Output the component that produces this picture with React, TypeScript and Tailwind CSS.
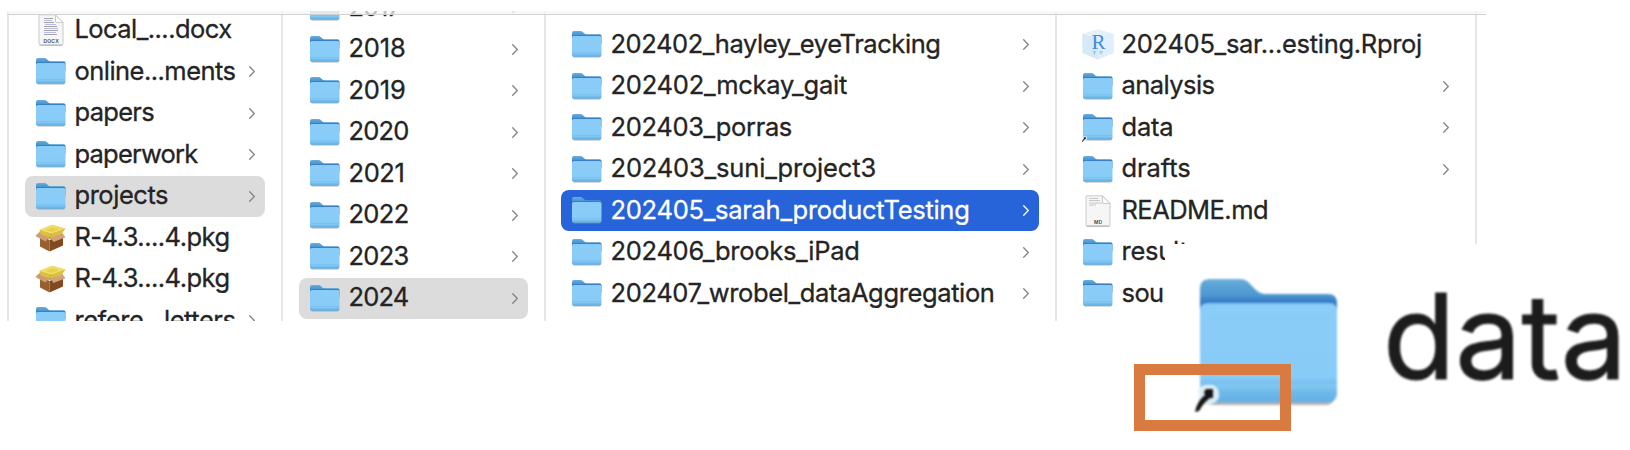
import { useId, useLayoutEffect, useRef, useState } from "react";

type Kind = "folder" | "alias" | "docx" | "md" | "pkg" | "rproj";
type Entry = { name: string; width: number; kind?: Kind; leaf?: boolean; state?: "path" | "active" };

// Label whose tracking is adjusted so that it fills the given width.
function Label({ text, width, className }: { text: string; width: number; className: string }) {
  const ref = useRef<HTMLSpanElement>(null);
  const [spacing, setSpacing] = useState(0);
  useLayoutEffect(() => {
    const el = ref.current;
    if (!el) return;
    el.style.letterSpacing = "0px";
    const natural = el.getBoundingClientRect().width;
    const next = (width - natural) / text.length;
    el.style.letterSpacing = `${next}px`;
    setSpacing(next);
  }, [text, width]);
  return (
    <span ref={ref} className={className} style={{ letterSpacing: `${spacing}px` }}>
      {text}
    </span>
  );
}

function Folder({ className, alias }: { className: string; alias?: boolean }) {
  const id = useId();
  return (
    <svg viewBox="0 0 137 126" className={className} overflow="visible" preserveAspectRatio="none">
      <defs>
        <linearGradient id={`${id}b`} x1="0" y1="0" x2="0" y2="1">
          <stop offset="0" stopColor="#6db3e0" />
          <stop offset="0.08" stopColor="#5ea6d8" />
          <stop offset="0.28" stopColor="#4c97d1" />
          <stop offset="0.36" stopColor="#397ec6" />
          <stop offset="1" stopColor="#397ec6" />
        </linearGradient>
        <linearGradient id={`${id}f`} x1="0" y1="0" x2="0" y2="1">
          <stop offset="0" stopColor="#7fcaf7" />
          <stop offset="0.04" stopColor="#8bcdf8" />
          <stop offset="0.76" stopColor="#87cbf7" />
          <stop offset="0.8" stopColor="#7ac0ee" />
          <stop offset="0.84" stopColor="#82c7f3" />
          <stop offset="0.9" stopColor="#6fb9ea" />
          <stop offset="1" stopColor="#60b0e4" />
        </linearGradient>
      </defs>
      <path d="M3 114 Q3 126 12 126 H126 Q135 126 135 114Z" fill="#8c9299" opacity="0.7" />
      <path
        d="M0 10 Q0 0 9 0 H40 Q46 0 50 5 L56 11 Q60 15 66 15 H128 Q137 15 137 24 V60 H0Z"
        fill={`url(#${id}b)`}
      />
      <path d="M0 32 Q0 24 8 24 H129 Q137 24 137 32 V114 Q137 123 128 123 H9 Q0 123 0 114Z" fill={`url(#${id}f)`} />
      {alias && (
        <g>
          <path d="M-2 126 V110 Q4 105 13 106 Q20 109 19 118 Q17 124 9 126Z" fill="#e8f2f8" opacity="0.9" />
          <path d="M-5 133 Q-3 122 5 116 L4 113 L6 110 H13 V119 L10 119 Q4 123 -1 132Z" fill="#141414" />
        </g>
      )}
    </svg>
  );
}

function Page({ ext }: { ext: "DOCX" | "MD" }) {
  return (
    <svg viewBox="0 0 26 32" className="h-8 w-[26px]">
      <path d="M2 .8H17.5L25 8.500V29.500Q25 31 23.500 31H2.500Q1 31 1 29.500V2Q1 .8 2 .8Z" fill="#f6f6f6" stroke="#c9c9c9" strokeWidth="1" />
      <path d="M1.500 31.200H24.500" stroke="#a9a9a9" strokeWidth="0.9" />
      <path d="M17.500 1V7Q17.500 8.500 19 8.500H25Z" fill="#fdfdfd" stroke="#c4c4c4" strokeWidth="0.900" />
      {ext === "DOCX" ? (
        <g strokeWidth="1" fill="none">
          <path d="M6 4.500H15M6 8.500H16M6 12.500H19M6 16.500H20M6 20.500H19" stroke="#a3a3a8" />
          <path d="M6 6.500H14M7 10.500H18M6 14.500H20M6 18.500H18" stroke="#b9bbe6" />
        </g>
      ) : (
        <path d="M4 3.500H13M4 5.500H15M4 8H17M4 10H11" stroke="#c2c2c2" strokeWidth="0.900" />
      )}
      <text
        x="13.200"
        y="28.500"
        textAnchor="middle"
        fontFamily="Inter, sans-serif"
        fontWeight="600"
        fontSize={ext === "DOCX" ? 5 : 4.8}
        letterSpacing="0.2"
        fill="#3d3d3d"
      >
        {ext}
      </text>
    </svg>
  );
}

function Package() {
  return (
    <svg viewBox="0 0 31 28" className="h-7 w-[31px] shrink-0">
      <path d="M5 11L14.500 16V27.500L5 22.500Z" fill="#96602f" />
      <path d="M14.500 16L28 11V21.500L14.500 27.500Z" fill="#80491f" />
      <path d="M5 6L17 9.500L27 6V11L14.500 15L5 11Z" fill="#b98f2c" />
      <path d="M5.500 7L.3 12L10.500 17.500L14.800 12.500Z" fill="#cf9c72" />
      <path d="M14.800 12.500L18.500 18L30.500 13.300L26.500 8Z" fill="#d3a27b" />
      <path d="M4.500 6L17 .8L30.500 4.500L26.500 10L14.500 13.500L6 10.500Z" fill="#dcc040" />
      <path d="M4.500 6L17 .8L30.500 4.500L16.500 9.500Z" fill="#f0de68" />
      <path d="M11 5.800L17 3.300L24.500 5L16.500 8Z" fill="#e2c842" opacity="0.7" />
      <path d="M16.500 9.500L14.500 13.500" stroke="#c9a62a" strokeWidth="0.800" />
    </svg>
  );
}

function RProject() {
  return (
    <svg viewBox="0 0 32 31" className="h-[31px] w-8 shrink-0">
      <path d="M16 .5L31.500 5V24L16 30.500L.5 24V5Z" fill="#dcebf8" />
      <path d="M16 .5L31.500 5L16 9.500L.5 5Z" fill="#e4f1f8" />
      <path d="M.5 5L16 9.500V30.500L.5 24Z" fill="#d5e9f6" opacity="0.8" />
      <path d="M31.500 5L16 9.500V30.500L31.500 24Z" fill="#e1eefb" />
      <text x="16.500" y="20" textAnchor="middle" fontFamily="'Liberation Serif', serif" fontSize="21" fill="#3f8be0">
        R
      </text>
      <path d="M11 22.800H14M17 22.800L20 25.500M12.500 22.800V25.500M18 22.800H21" stroke="#91b9e0" strokeWidth="1" fill="none" />
    </svg>
  );
}

function Icon({ kind }: { kind: Kind }) {
  if (kind === "docx") return <Page ext="DOCX" />;
  if (kind === "md") return <Page ext="MD" />;
  if (kind === "pkg") return <Package />;
  if (kind === "rproj") return <RProject />;
  return <Folder className="h-[26.5px] w-[29.5px]" alias={kind === "alias"} />;
}

function Row({ entry }: { entry: Entry }) {
  const { name, width, kind = "folder", leaf, state } = entry;
  const active = state === "active";
  const bg = active ? "bg-[#2763d9] text-white" : state === "path" ? "bg-[#dcdcdc] text-[#242424]" : "text-[#242424]";
  return (
    <div className="h-[41.5px] shrink-0">
      <div className={`flex h-[41px] items-center rounded-[8px] pr-[10.5px] pl-[11px] ${bg}`}>
        <div className="flex w-[29.5px] shrink-0 items-center justify-center">
          <Icon kind={kind} />
        </div>
        <div className="relative -top-px ml-[9px] flex-1 whitespace-nowrap leading-[36px] [-webkit-text-stroke:0.3px_currentColor]">
          <Label text={name} width={width + 2} className="inline-block" />
        </div>
        {!leaf && (
          <svg viewBox="0 0 6 11" className={`h-[11px] w-[6px] shrink-0 ${active ? "text-white" : "text-[#858585]"}`}>
            <path d="M.7 .7L5.300 5.500L.7 10.300" fill="none" stroke="currentColor" strokeWidth="1.300" strokeLinecap="round" strokeLinejoin="round" />
          </svg>
        )}
      </div>
    </div>
  );
}

function Column({ entries, className }: { entries: Entry[]; className: string }) {
  return (
    <div className={`flex h-full shrink-0 flex-col overflow-hidden border-r-2 border-[#e6e6e6] ${className}`}>
      {entries.map((e, i) => (
        <Row key={i} entry={e} />
      ))}
    </div>
  );
}

const home: Entry[] = [
  { name: "Local_....docx", width: 155, kind: "docx", leaf: true },
  { name: "online...ments", width: 159 },
  { name: "papers", width: 77.5 },
  { name: "paperwork", width: 121 },
  { name: "projects", width: 91.5, state: "path" },
  { name: "R-4.3....4.pkg", width: 153, kind: "pkg", leaf: true },
  { name: "R-4.3....4.pkg", width: 153, kind: "pkg", leaf: true },
  { name: "refere...letters", width: 159 },
];

const years: Entry[] = [
  { name: "2017", width: 50 },
  { name: "2018", width: 55 },
  { name: "2019", width: 55 },
  { name: "2020", width: 58 },
  { name: "2021", width: 54 },
  { name: "2022", width: 58 },
  { name: "2023", width: 58 },
  { name: "2024", width: 58, state: "path" },
];

const projects: Entry[] = [
  { name: "202402_hayley_eyeTracking", width: 328 },
  { name: "202402_mckay_gait", width: 234.5 },
  { name: "202403_porras", width: 179.5 },
  { name: "202403_suni_project3", width: 263.5 },
  { name: "202405_sarah_productTesting", width: 357, state: "active" },
  { name: "202406_brooks_iPad", width: 247 },
  { name: "202407_wrobel_dataAggregation", width: 382 },
];

const files: Entry[] = [
  { name: "202405_sar...esting.Rproj", width: 298.5, kind: "rproj", leaf: true },
  { name: "analysis", width: 91 },
  { name: "data", width: 50, kind: "alias" },
  { name: "drafts", width: 67 },
  { name: "README.md", width: 144.5, kind: "md", leaf: true },
  { name: "results", width: 77 },
  { name: "source", width: 77 },
];

export default function App() {
  return (
    <main className="relative h-[450px] w-[1630px] overflow-hidden bg-white font-['Inter',sans-serif] text-[25.5px]">
      <div className="pt-[11px] pl-[7px]">
        <div className="relative h-[310px] w-[1479px] overflow-hidden">
          <div className="flex h-full w-[1470px] border-l-2 border-[#e6e6e6]">
            <Column entries={home} className="w-[274px] pr-[16px] pl-[16px] [&>*:first-child]:-mt-[1.500px]" />
            <Column entries={years} className="w-[263px] pr-[16px] pl-[16px] [&>*:first-child]:-mt-[24px]" />
            <Column entries={projects} className="w-[511px] pr-[16px] pl-[15px] [&>*:first-child]:mt-[13px]" />
            <Column entries={files} className="w-[420px] pr-[16px] pl-[15px] [&>*:first-child]:mt-[13px]" />
          </div>
          <div className="absolute inset-x-0 top-0 h-[4px] border-b border-[#d2d2d2] bg-[#f5f5f5]/75" />
        </div>
      </div>
      <div className="absolute top-[244px] left-[1165px] h-[206px] w-[465px] bg-white">
        <div className="flex pt-[34.500px] pl-[35px] blur-[0.8px]">
          <Folder className="h-[126px] w-[137px] shrink-0" alias />
          <div className="-mt-[13px] ml-[46px] whitespace-nowrap text-[118px] leading-[140px] text-[#1c1c1c] [-webkit-text-stroke:1.2px_currentColor]">
            <Label text="data" width={244} className="inline-block" />
          </div>
        </div>
      </div>
      <div className="absolute top-[364px] left-[1134px] h-[67px] w-[157px] border-[11px] border-[#d97a41]" />
    </main>
  );
}
